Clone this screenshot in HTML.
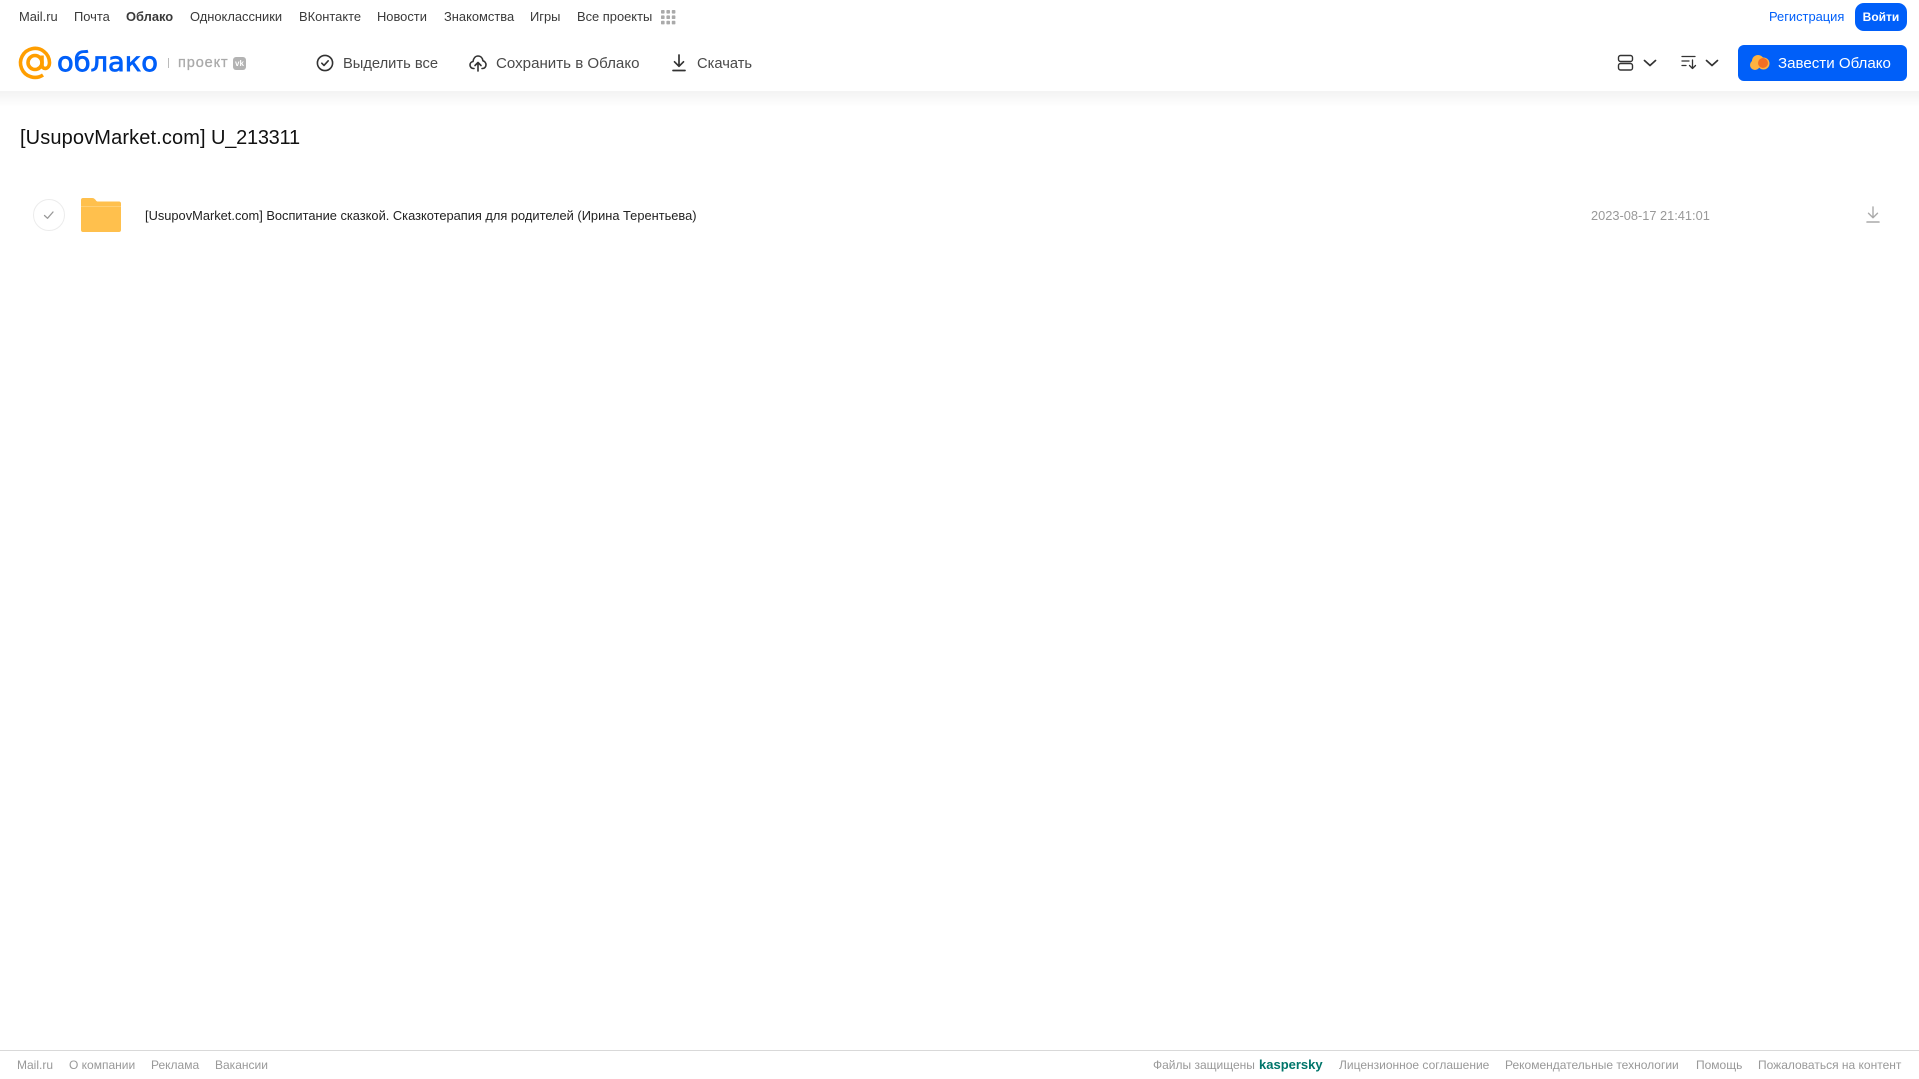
<!DOCTYPE html>
<html lang="ru"><head><meta charset="utf-8"><title>Облако</title>
<style>
html,body{margin:0;padding:0;background:#fff}
body{width:1919px;height:1079px;position:relative;overflow:hidden;font-family:"Liberation Sans",Arial,sans-serif}
.t{position:absolute;white-space:nowrap;line-height:16px}
.n{font-size:12.9px;color:#3a3a3a;top:9px}
.b{font-size:14.7px;color:#4a4a4a;top:56px}
.f{font-size:12px;color:#999;top:1057px}
svg{position:absolute;overflow:visible}
</style></head><body>
<div style="position:absolute;left:0;top:91px;width:1919px;height:16px;background:linear-gradient(#f3f3f3,#fff)"></div>

<span class="t n" style="left:19px">Mail.ru</span>
<span class="t n" style="left:74px">Почта</span>
<span class="t n" style="left:126px;font-weight:bold">Облако</span>
<span class="t n" style="left:190px">Одноклассники</span>
<span class="t n" style="left:299px">ВКонтакте</span>
<span class="t n" style="left:377px">Новости</span>
<span class="t n" style="left:444px">Знакомства</span>
<span class="t n" style="left:530px">Игры</span>
<span class="t n" style="left:577px">Все проекты</span>
<svg style="left:661px;top:10px" width="15" height="15" fill="#aaa"><rect x="0" y="0" width="3.6" height="3.6" rx=".8"/><rect x="5.4" y="0" width="3.6" height="3.6" rx=".8"/><rect x="10.8" y="0" width="3.6" height="3.6" rx=".8"/><rect x="0" y="5.4" width="3.6" height="3.6" rx=".8"/><rect x="5.4" y="5.4" width="3.6" height="3.6" rx=".8"/><rect x="10.8" y="5.4" width="3.6" height="3.6" rx=".8"/><rect x="0" y="10.8" width="3.6" height="3.6" rx=".8"/><rect x="5.4" y="10.8" width="3.6" height="3.6" rx=".8"/><rect x="10.8" y="10.8" width="3.6" height="3.6" rx=".8"/></svg>
<span class="t n" style="left:1769px;color:#005ff9">Регистрация</span>
<div style="position:absolute;left:1855px;top:3px;width:52px;height:28px;border-radius:9px;background:#005ff9;color:#fff;font-size:12px;font-weight:bold;line-height:28px;text-align:center">Войти</div>

<svg style="left:18px;top:46px" width="35" height="34" viewBox="0 0 35 34" fill="none" stroke="#ff9e00" stroke-width="3.6"><circle cx="17" cy="16.5" r="7"/><path d="M24 9.5V19C24 24 31.500 24 31.500 16.500A14.500 14.500 0 1 0 25 29"/></svg>
<svg style="left:57px;top:44px" width="105" height="34"><text x="0" y="27" font-family="'DejaVu Sans',sans-serif" font-size="27" fill="#005ff9" stroke="#005ff9" stroke-width=".8" textLength="101" lengthAdjust="spacingAndGlyphs">облако</text></svg>
<div style="position:absolute;left:168px;top:58px;width:1px;height:10px;background:#bbb"></div>
<span class="t" style="left:178px;top:55px;font-size:14.5px;color:#aaa;letter-spacing:.9px;-webkit-text-stroke:.3px #aaa">проект</span>
<div style="position:absolute;left:233px;top:57px;width:13px;height:13px;border-radius:3px;background:#b3b3b3;color:#fff;font-size:8px;font-weight:bold;line-height:13px;text-align:center">vk</div>

<svg style="left:316px;top:54px" width="18" height="18" fill="none" stroke="#333" stroke-width="1.6" stroke-linecap="round" stroke-linejoin="round"><circle cx="9" cy="9" r="7.6"/><path d="M5.8 9.2L8 11.400L12.200 6.800"/></svg>
<span class="t b" style="left:343px">Выделить все</span>
<svg style="left:469px;top:54px" width="18" height="18" fill="none" stroke="#333" stroke-width="1.6" stroke-linecap="round" stroke-linejoin="round"><path d="M5 14.500H4.500C2.500 14.500 1 13 1 11C1 9.200 2.300 7.800 4 7.500C4.500 4.300 6.400 2 9 2C11.600 2 13.500 4 14 6.800C15.800 7.300 17 9 17 10.800C17 12.800 15.500 14.500 13.500 14.500H13"/><path d="M9 17V9M6 11.500L9 8.500L12 11.500"/></svg>
<span class="t b" style="left:496px;font-size:15.1px">Сохранить в Облако</span>
<svg style="left:671px;top:54px" width="16" height="18" fill="none" stroke="#333" stroke-width="1.7" stroke-linecap="round" stroke-linejoin="round"><path d="M8 1V12M3.500 7.800L8 12.300L12.500 7.800"/><path d="M2 16.500H14"/></svg>
<span class="t b" style="left:697px">Скачать</span>

<svg style="left:1617px;top:54px" width="18" height="18" fill="none" stroke="#333" stroke-width="1.4"><rect x="1.5" y="1.5" width="14" height="6" rx="2"/><rect x="1.5" y="9.500" width="14" height="6.500" rx="2"/></svg>
<svg style="left:1643px;top:59px" width="14" height="9" fill="none" stroke="#333" stroke-width="1.7" stroke-linecap="round" stroke-linejoin="round"><path d="M1.500 1.500L7 6.500L12.500 1.500"/></svg>
<svg style="left:1681px;top:55px" width="17" height="15" fill="none" stroke="#333" stroke-width="1.3" stroke-linecap="round" stroke-linejoin="round"><path d="M1 1.500H14M1 6H8M1 10.500H5M11.500 5V13.500M8.500 10.500L11.500 13.500L14.500 10.500"/></svg>
<svg style="left:1705px;top:59px" width="14" height="9" fill="none" stroke="#333" stroke-width="1.7" stroke-linecap="round" stroke-linejoin="round"><path d="M1.500 1.500L7 6.500L12.500 1.500"/></svg>

<div style="position:absolute;left:1738px;top:45px;width:169px;height:36px;border-radius:6px;background:#005ff9"></div>
<svg style="left:1750px;top:54px" width="20" height="18"><g fill="#ffb340"><circle cx="8" cy="7" r="6"/><circle cx="13.500" cy="9.500" r="6"/><circle cx="5" cy="11" r="5"/></g><circle cx="13" cy="9" r="5" fill="#f36f23"/></svg>
<span class="t" style="left:1778px;top:56px;font-size:15.1px;color:#fff">Завести Облако</span>

<span class="t" style="left:20px;top:126px;font-size:20px;line-height:25px;color:#111;letter-spacing:.13px">[UsupovMarket.com]</span>
<span class="t" style="left:211px;top:126px;font-size:20px;line-height:25px;color:#111;letter-spacing:-.25px">U_213311</span>

<svg style="left:33px;top:199px" width="32" height="32" fill="none"><circle cx="16" cy="16" r="15.5" stroke="#ececec"/><path d="M11.500 16.500L14.500 19.300L20 13" stroke="#999" stroke-width="1.3" stroke-linecap="round" stroke-linejoin="round"/></svg>
<svg style="left:81px;top:198px" width="40" height="34"><path d="M2 0H11C13 0 14 1 15 2.500C15.500 3.300 16 3.500 17 3.500H38C39.200 3.500 40 4.300 40 5.500V32C40 33.200 39.200 34 38 34H2C.8 34 0 33.200 0 32V2C0 .8.800 0 2 0Z" fill="#ffc04d"/><rect x="0" y="8" width="40" height="1" fill="#ffcf75"/></svg>
<span class="t" style="left:145px;top:208px;font-size:12.85px;color:#222">[UsupovMarket.com] Воспитание сказкой. Сказкотерапия для родителей (Ирина Терентьева)</span>
<span class="t" style="left:1591px;top:208px;font-size:12.8px;color:#999">2023-08-17 21:41:01</span>
<svg style="left:1866px;top:206px" width="14" height="18" fill="none" stroke="#aaa" stroke-width="1.4" stroke-linecap="round" stroke-linejoin="round"><path d="M7 1V11.500M2.500 7.300L7 11.800L11.500 7.300"/><path d="M1 16H13" stroke-width="1.6"/></svg>

<div style="position:absolute;left:0;top:1050px;width:1919px;height:1px;background:#d9d9d9"></div>
<span class="t f" style="left:17px">Mail.ru</span>
<span class="t f" style="left:69px">О компании</span>
<span class="t f" style="left:151px">Реклама</span>
<span class="t f" style="left:215px">Вакансии</span>
<span class="t f" style="left:1153px">Файлы защищены</span>
<span class="t f" style="left:1259px;font-weight:bold;color:#00756a;font-size:13px">kaspersky</span>
<span class="t f" style="left:1339px">Лицензионное соглашение</span>
<span class="t f" style="left:1505px">Рекомендательные технологии</span>
<span class="t f" style="left:1696px">Помощь</span>
<span class="t f" style="left:1758px">Пожаловаться на контент</span>
</body></html>
